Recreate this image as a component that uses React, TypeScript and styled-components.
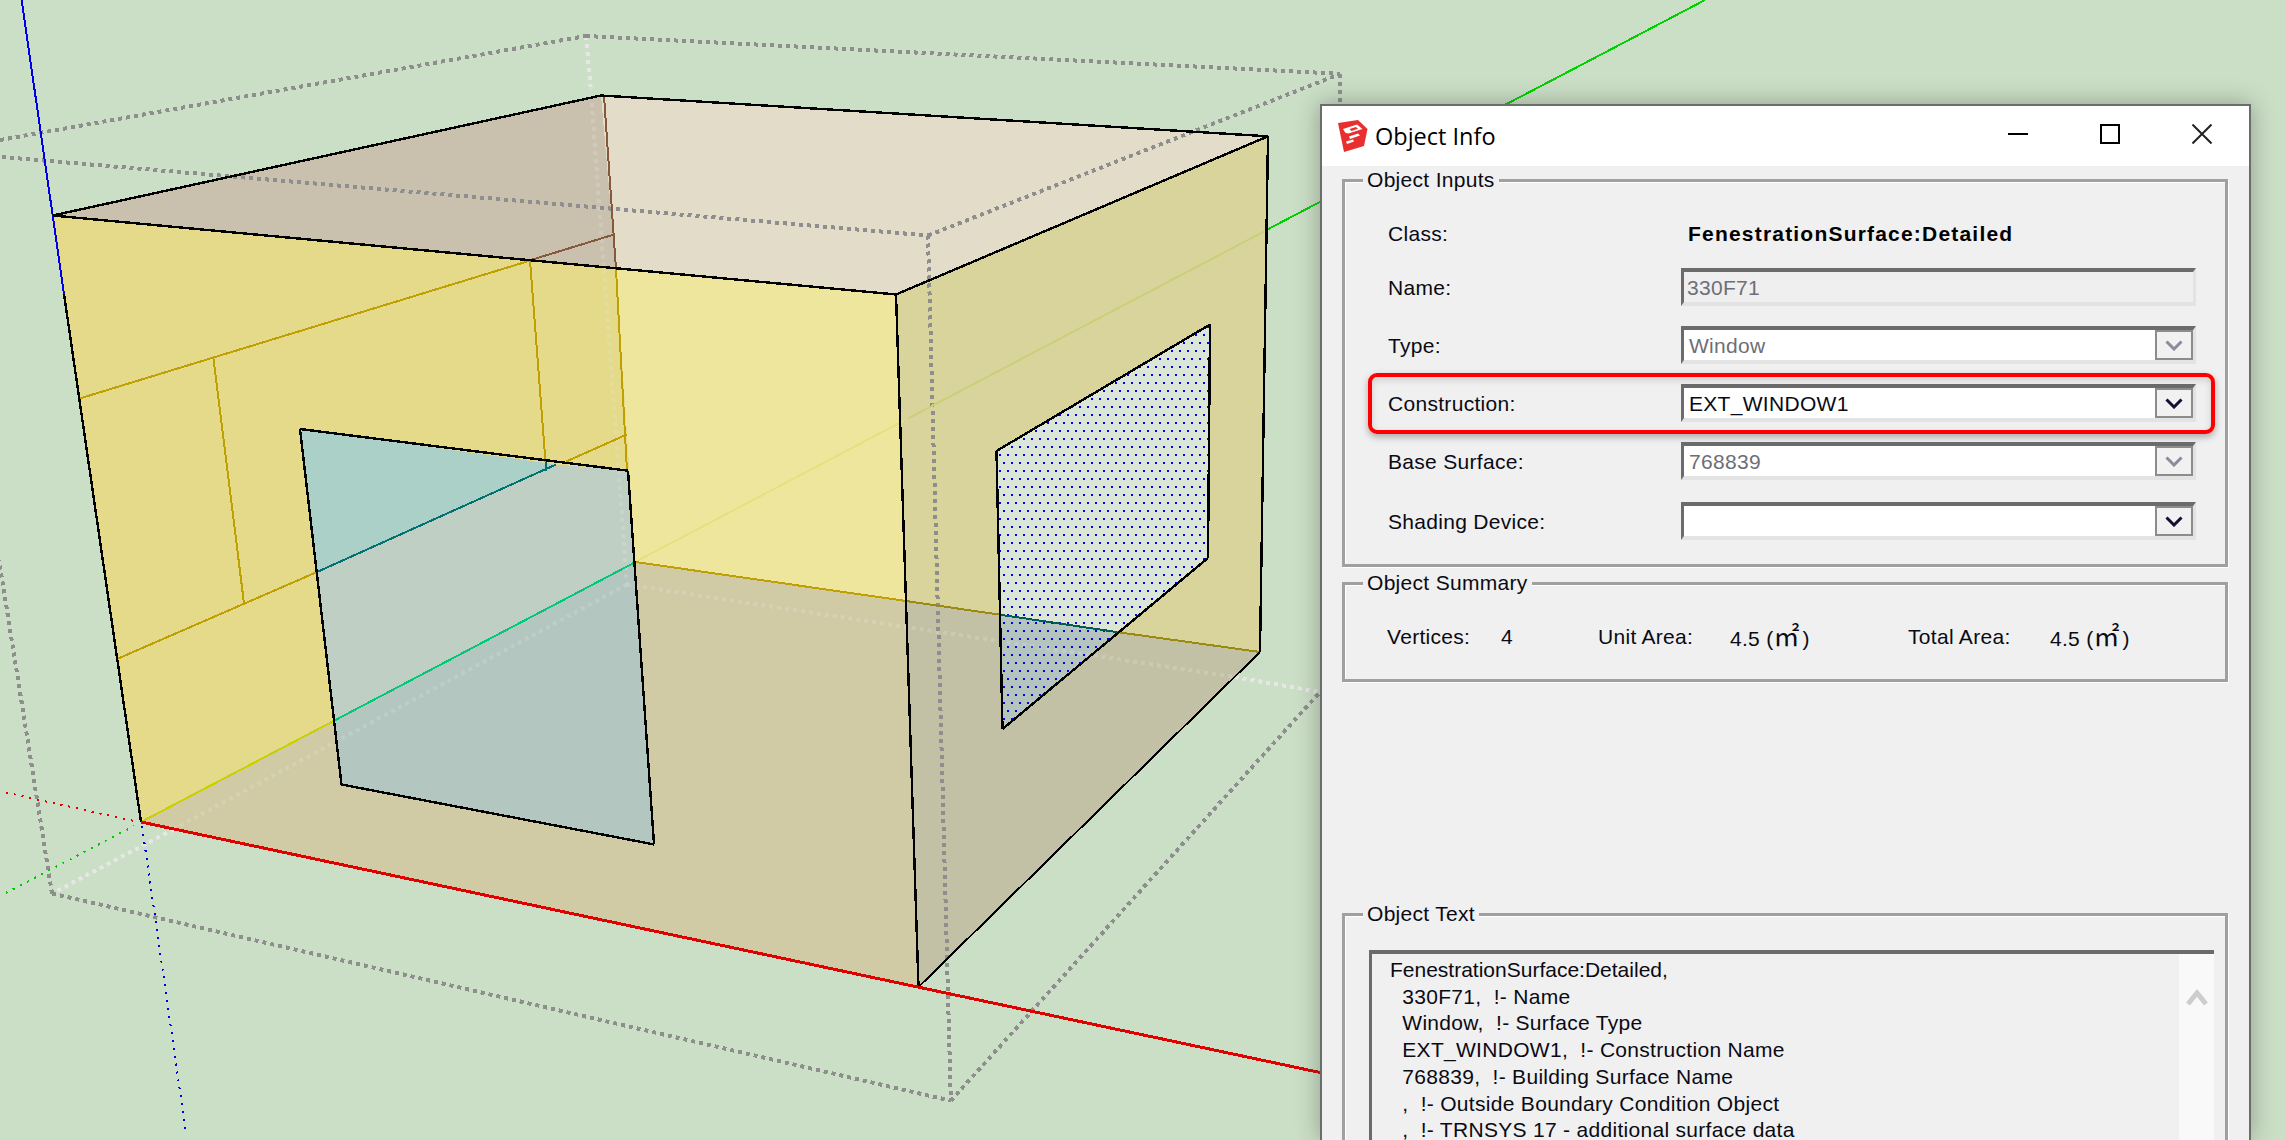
import React from "react";
import styled, { createGlobalStyle } from "styled-components";

const Global = createGlobalStyle`
  html, body { margin: 0; padding: 0; background: #cbdec6; }
  #root { width: 2285px; height: 1140px; }
`;

const Stage = styled.main`
  position: relative;
  width: 2285px;
  height: 1140px;
  overflow: hidden;
  background: #cbdec6;
`;

const Scene = styled.svg`
  display: block;
  width: 2285px;
  height: 1140px;
`;

const Dialog = styled.section`
  position: absolute;
  left: 1320px;
  top: 104px;
  width: 931px;
  height: 1036px;
  box-sizing: border-box;
  border: 2px solid #6a6e6a;
  border-bottom: 0;
  background: #f0f0f0;
  box-shadow: 0 0 22px rgba(50, 60, 50, 0.4);
  overflow: hidden;
  font-family: "Liberation Sans", "Noto Sans CJK KR", sans-serif;
  font-size: 21px;
  letter-spacing: 0.3px;
  color: #0a0a14;
  display: flex;
  flex-direction: column;
`;

const TitleBar = styled.header`
  height: 60px;
  flex: none;
  background: #fff;
  display: flex;
  align-items: center;
  padding-left: 16px;
  padding-right: 37px;
`;

const TitleText = styled.span`
  margin-left: 7px;
  font-family: "Open Sans", "Noto Sans", sans-serif;
  font-size: 23.5px;
  letter-spacing: 0;
  color: #000;
`;

const WindowControls = styled.div`
  margin-left: auto;
  display: flex;
  align-items: center;
  gap: 72px;
  padding-bottom: 5px;
`;

const ControlIcon = styled.svg`
  display: block;
  width: 20px;
  height: 20px;
`;

const Body = styled.div`
  flex: 1;
  padding: 2px 21px 0 20px;
  display: flex;
  flex-direction: column;
`;

const Group = styled.fieldset<{ $gap?: number }>`
  margin: ${(p) => p.$gap ?? 0}px 0 0;
  padding: 0;
  min-width: 0;
  border: 3px solid #a0a0a0;
  box-shadow: inset 1px 1px 0 #fff, 1px 1px 0 #fff;
`;

const GroupTitle = styled.legend`
  margin-left: 18px;
  padding: 0 4px;
  height: 24px;
  line-height: 24px;
  background: #f0f0f0;
`;

const InputsBody = styled.div`
  padding: 30px 29px 24px 43px;
  display: flex;
  flex-direction: column;
`;

const ClassRow = styled.div`
  display: grid;
  grid-template-columns: 300px 1fr;
  height: 24px;
  line-height: 24px;
  margin-bottom: 22px;
`;

const ClassValue = styled.strong`
  font-weight: 700;
  letter-spacing: 1.2px;
  color: #000;
`;

const Row = styled.div<{ $gap?: number }>`
  position: relative;
  display: grid;
  grid-template-columns: 293px 515px;
  align-items: center;
  height: 38px;
  margin-top: ${(p) => p.$gap ?? 20}px;
`;

const Label = styled.label`
  padding-top: 2px;
`;

const Field = styled.div<{ $disabled?: boolean; $plain?: boolean }>`
  box-sizing: border-box;
  height: 38px;
  display: flex;
  align-items: stretch;
  background: ${(p) => (p.$plain ? "#efefef" : "#fff")};
  border-top: 4px solid #6b6b6b;
  border-left: 3px solid #6b6b6b;
  border-bottom: 4px solid #e3e3e3;
  border-right: 3px solid #e3e3e3;
  color: ${(p) => (p.$disabled ? "#6e6e76" : "#0a0a14")};
`;

const FieldText = styled.span<{ $plain?: boolean }>`
  flex: 1;
  padding-left: ${(p) => (p.$plain ? 3 : 5)}px;
  line-height: 31px;
`;

const DropButton = styled.span`
  box-sizing: border-box;
  flex: none;
  width: 38px;
  border: 2px solid #8c8c8c;
  background: #f1f1f1;
  display: flex;
  align-items: center;
  justify-content: center;
`;

const Chevron = styled.svg`
  display: block;
  width: 18px;
  height: 11px;
`;

const Highlight = styled.div`
  position: absolute;
  top: -11px;
  bottom: -12px;
  left: -20px;
  right: -19px;
  border: 4px solid #ff0000;
  border-radius: 9px;
  box-shadow: 0 3px 7px rgba(0, 0, 0, 0.3), inset 0 3px 7px rgba(0, 0, 0, 0.14);
  pointer-events: none;
`;

const SummaryBody = styled.div`
  padding: 30px 0 28px 42px;
  display: grid;
  grid-template-columns: 114px 97px 132px 178px 142px auto;
  line-height: 24px;
  white-space: nowrap;
`;

const AreaUnit = styled.span`
  font-family: "Noto Sans CJK KR", sans-serif;
  font-size: 26px;
  letter-spacing: 3px;
  line-height: 20px;
`;

const TextBody = styled.div`
  padding: 24px 11px 0 24px;
`;

const TextBox = styled.div`
  display: flex;
  height: 190px;
  border-top: 4px solid #6b6b6b;
  border-left: 3px solid #6b6b6b;
  background: #f0f0f0;
`;

const TextLines = styled.pre`
  flex: 1;
  margin: 0;
  padding: 3px 0 0 18px;
  font: inherit;
  line-height: 26.7px;
`;

const HeadLine = styled.span`
  letter-spacing: 0;
`;

const ScrollTrack = styled.div`
  flex: none;
  width: 35px;
  background: #f9f9f9;
  display: flex;
  justify-content: center;
  padding-top: 35px;
`;

const ScrollArrow = styled.svg`
  display: block;
  width: 22px;
  height: 17px;
`;

type P = [number, number];
const A: P = [52.7, 215.5];
const B: P = [601, 95.5];
const C: P = [1268, 136.3];
const D: P = [896, 294.5];
const E: P = [1260, 652];
const F: P = [918.5, 987];
const G: P = [141, 822];
const H: P = [635.5, 562];
const J: P = [616, 269];
const Q: P = [906, 601];

const W1: P = [300, 429];
const W2: P = [628, 470.7];
const W3: P = [654, 844.4];
const W4: P = [341.5, 784.5];
const WK1: P = [556, 464.5];
const WK2: P = [317, 572];
const WG1: P = [334.5, 720.5];
const WG2: P = [634.4, 562.6];

const R1: P = [1210, 324.5];
const R2: P = [996.5, 451];
const R3: P = [1002.5, 729];
const R4: P = [1208, 558];
const RF1: P = [1000, 614.7];
const RF2: P = [1116.6, 632];

const pts = (...p: P[]) => p.map((q) => q.join(",")).join(" ");

const fills: [string, P[]][] = [
  ["#e2dcc9", [B, C, D, J]],
  ["#c9c0ae", [A, B, J]],
  ["#e4da8a", [A, J, H, G]],
  ["#efe69e", [J, D, Q, H]],
  ["#d9d39c", [D, C, E, Q]],
  ["#d0cba4", [G, H, Q, F]],
  ["#c2c1a5", [Q, E, F]],
  ["#abd0c8", [W1, WK1, WK2]],
  ["#c0cfc3", [WK1, W2, WG2, WG1, WK2]],
  ["#b3c6bf", [WG1, WG2, W3, W4]],
  ["#dce6d6", [R1, R2, RF1, RF2, R4]],
  ["#b5c5bd", [RF1, RF2, R3]],
];

type Seg = [P, P, string, number, string?];
const GRAY = "#8e8e8e";
const PALE = "#e6e6e6";
const FAINT = "rgba(232,232,232,0.24)";
const P1: P = [586, 36];
const P2: P = [1340.4, 73.8];
const P3: P = [928, 235.5];
const P4: P = [950.8, 1100.7];
const P5: P = [1320, 692];
const P6: P = [52, 893.5];
const P7: P = [627, 584.5];
const GD = "4 4";
const WD = "4 4";

const segments: Seg[] = [
  // construction lines that lie behind the translucent faces
  [P1, [590.6, 87], PALE, 4, WD],
  [[590.6, 87], P7, FAINT, 4, WD],
  [P7, [174, 829], FAINT, 4, WD],
  [[174, 829], P6, PALE, 4, WD],
  [P7, [1234.7, 677], FAINT, 4, WD],
  [[1234.7, 677], P5, PALE, 4, WD],
  // bounding box
  [[0, 140], P1, GRAY, 4, GD],
  [P1, P2, GRAY, 4, GD],
  [[2, 157], P3, GRAY, 4, GD],
  [P3, P2, GRAY, 4, GD],
  [P3, P4, GRAY, 4, GD],
  [P4, P5, GRAY, 4, GD],
  [P6, P4, GRAY, 4, GD],
  [P6, [-1, 560], GRAY, 4, GD],
  [P2, [1340.4, 110], GRAY, 4, GD],
  // inferred green axis
  [G, WG1, "#c8d000", 2],
  [WG1, WG2, "#00c878", 2],
  [[636, 561.5], [904, 420.6], "#e2e37e", 2],
  [[908, 418.5], [1264, 231.5], "#c8d078", 2],
  [[1267, 229.7], [1705, 0], "#00d000", 2],
  // axis extensions
  [[5.8, 792.5], [134, 821], "#e00000", 2, "2 6"],
  [[5.8, 893], [134, 826], "#00c800", 2, "2 6"],
  [[142, 826], [186, 1133], "#0000e8", 2, "2 6"],
  [[21.6, 0], [64, 294], "#0000e8", 2],
  // subdivisions of the wall
  [[78, 399], [530, 260.6], "#bfa000", 2],
  [[213.4, 358], [244, 603.4], "#bfa000", 2],
  [[530, 260.6], [545.5, 461.6], "#bfa000", 2],
  [[545.5, 461.6], [545.5, 470.7], "#007070", 2],
  [[117, 659], WK2, "#bfa000", 2],
  [WK2, WK1, "#007070", 2],
  [[566, 461.6], [627, 434.4], "#bfa000", 2],
  [J, [627, 471], "#bfa000", 2],
  [[604, 96], J, "#87593c", 2],
  [[529, 260.6], [614, 234.5], "#87593c", 2],
  // floor edge
  [H, Q, "#bfa000", 2],
  [Q, RF1, "#9a8a10", 2],
  [RF1, RF2, "#005c50", 2],
  [RF2, E, "#9a8a10", 2],
  // outline
  [A, B, "#000", 2.4],
  [B, C, "#000", 2.4],
  [A, D, "#000", 2.4],
  [D, C, "#000", 2.4],
  [C, E, "#000", 2.4],
  [E, F, "#000", 2],
  [D, F, "#000", 2.4],
  [[64, 294], G, "#000", 2.4],
  [W1, W2, "#000", 2.4],
  [W2, W3, "#000", 2.4],
  [W3, W4, "#000", 2.4],
  [W4, W1, "#000", 2.4],
  [R1, R2, "#000", 2.4],
  [R2, R3, "#000", 2.4],
  [R3, R4, "#000", 2.4],
  [R4, R1, "#000", 2.4],
  [G, [1321, 1072.7], "#e00000", 3],
];

const ModelDrawing = () => (
  <Scene viewBox="0 0 2285 1140" shapeRendering="crispEdges">
    <defs>
      <pattern id="dots" x="999" y="454" width="8" height="16" patternUnits="userSpaceOnUse">
        <rect x="0" y="0" width="2" height="2" fill="#0000ff" />
        <rect x="4" y="8" width="2" height="2" fill="#0000ff" />
      </pattern>
    </defs>
    {fills.map(([c, p], i) => (
      <polygon key={i} points={pts(...p)} fill={c} />
    ))}
    <polygon points={pts(R1, R2, R3, R4)} fill="url(#dots)" />
    {segments.map(([a, b, c, w, d], i) => (
      <line key={i} x1={a[0]} y1={a[1]} x2={b[0]} y2={b[1]} stroke={c} strokeWidth={w} strokeDasharray={d} />
    ))}
  </Scene>
);

const LogoMark = styled.svg`
  display: block;
  flex: none;
  width: 30px;
  height: 32px;
`;

const Logo = () => (
  <LogoMark viewBox="0 0 30 32">
    <polygon points="0,3 20,0 29.5,9 26,26 6,32" fill="#e92e30" />
    <polygon points="5,9 19,4.5 24.5,9 10.5,13.5 7.5,13" fill="#fff" />
    <polygon points="11.5,9 18,7 20,8.8 13.5,11" fill="#e92e30" />
    <polygon points="11,16.5 20,13.5 22,15.5 12,19" fill="#fff" />
    <polygon points="8,21.5 15,19.5 16,21.5 9,24" fill="#fff" />
  </LogoMark>
);

const DownChevron = ({ dim }: { dim?: boolean }) => (
  <Chevron viewBox="0 0 18 11">
    <path d="M1.5 1.5 L9 9 L16.5 1.5" fill="none" stroke={dim ? "#8b8b9c" : "#101030"} strokeWidth="3" />
  </Chevron>
);

const Combo = ({ text, disabled }: { text: string; disabled?: boolean }) => (
  <Field $disabled={disabled}>
    <FieldText>{text}</FieldText>
    <DropButton>
      <DownChevron dim={disabled} />
    </DropButton>
  </Field>
);

const objectText = `
  330F71,  !- Name
  Window,  !- Surface Type
  EXT_WINDOW1,  !- Construction Name
  768839,  !- Building Surface Name
  ,  !- Outside Boundary Condition Object
  ,  !- TRNSYS 17 - additional surface data`;

export default function App() {
  return (
    <Stage>
      <Global />
      <ModelDrawing />
      <Dialog>
        <TitleBar>
          <Logo />
          <TitleText>Object Info</TitleText>
          <WindowControls>
            <ControlIcon viewBox="0 0 20 20">
              <rect x="0" y="9" width="20" height="2" fill="#000" />
            </ControlIcon>
            <ControlIcon viewBox="0 0 20 20">
              <rect x="1" y="1" width="18" height="18" fill="none" stroke="#000" strokeWidth="2" />
            </ControlIcon>
            <ControlIcon viewBox="0 0 20 20">
              <path d="M0.5 0.5 L19.5 19.5 M19.5 0.5 L0.5 19.5" stroke="#222" strokeWidth="2" fill="none" />
            </ControlIcon>
          </WindowControls>
        </TitleBar>
        <Body>
          <Group>
            <GroupTitle>Object Inputs</GroupTitle>
            <InputsBody>
              <ClassRow>
                <span>Class:</span>
                <ClassValue>FenestrationSurface:Detailed</ClassValue>
              </ClassRow>
              <Row $gap={0}>
                <Label>Name:</Label>
                <Field $disabled $plain>
                  <FieldText $plain>330F71</FieldText>
                </Field>
              </Row>
              <Row>
                <Label>Type:</Label>
                <Combo text="Window" disabled />
              </Row>
              <Row>
                <Label>Construction:</Label>
                <Combo text="EXT_WINDOW1" />
                <Highlight />
              </Row>
              <Row>
                <Label>Base Surface:</Label>
                <Combo text="768839" disabled />
              </Row>
              <Row $gap={22}>
                <Label>Shading Device:</Label>
                <Combo text="" />
              </Row>
            </InputsBody>
          </Group>
          <Group $gap={4}>
            <GroupTitle>Object Summary</GroupTitle>
            <SummaryBody>
              <span>Vertices:</span>
              <span>4</span>
              <span>Unit Area:</span>
              <span>
                4.5 (<AreaUnit>㎡</AreaUnit>)
              </span>
              <span>Total Area:</span>
              <span>
                4.5 (<AreaUnit>㎡</AreaUnit>)
              </span>
            </SummaryBody>
          </Group>
          <Group $gap={220}>
            <GroupTitle>Object Text</GroupTitle>
            <TextBody>
              <TextBox>
                <TextLines>
                  <HeadLine>FenestrationSurface:Detailed,</HeadLine>
                  {objectText}
                </TextLines>
                <ScrollTrack>
                  <ScrollArrow viewBox="0 0 22 17">
                    <path d="M2 15 L11 4 L20 15" fill="none" stroke="#cdcdcd" strokeWidth="5" />
                  </ScrollArrow>
                </ScrollTrack>
              </TextBox>
            </TextBody>
          </Group>
        </Body>
      </Dialog>
    </Stage>
  );
}
